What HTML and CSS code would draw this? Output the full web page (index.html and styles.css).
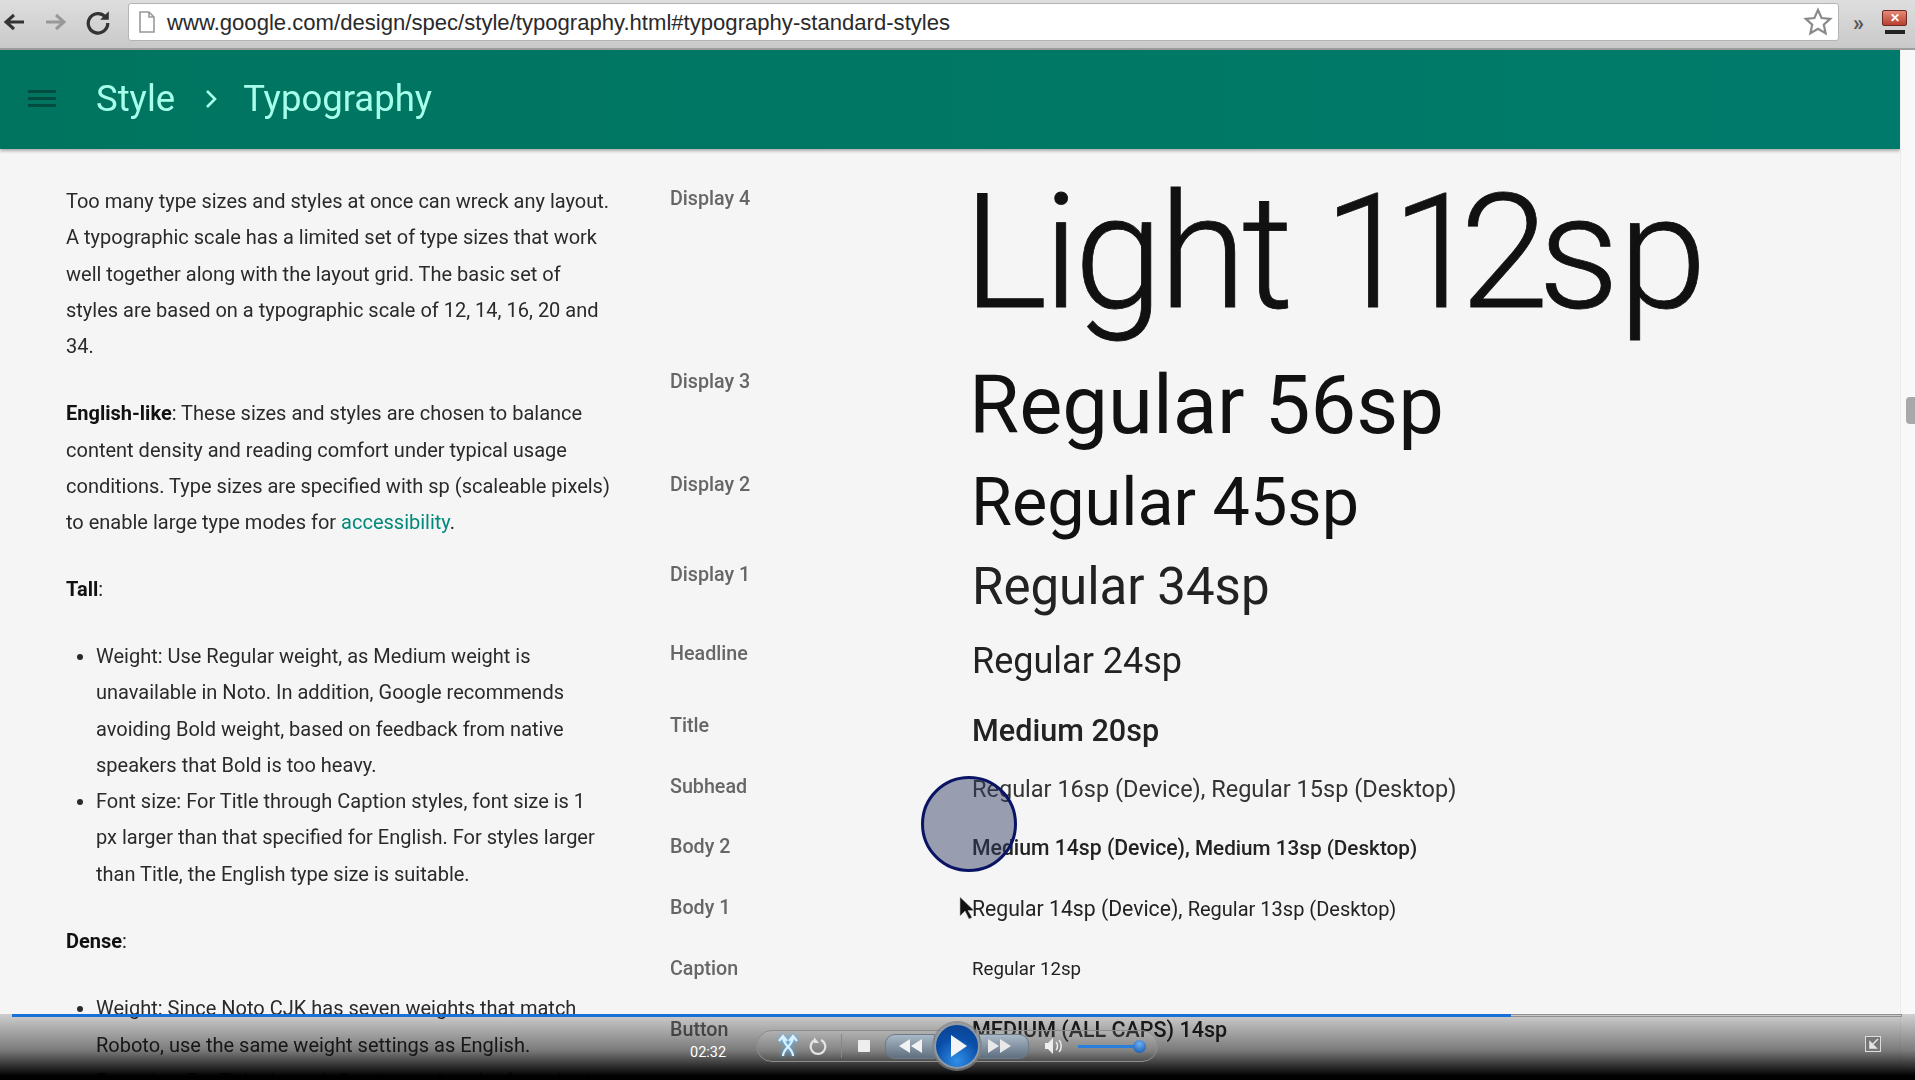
FILE: index.html
```html
<!DOCTYPE html>
<html>

<head>
    <title>Typography - Style</title>
    <link rel="stylesheet" href="styles.css">
</head>

<body>
    <div class="browser-bar">
        <svg class="nav-icon back" width="24" height="24" viewBox="0 0 24 24"><path d="M22 12H6M12 5l-8 7 8 7" fill="none" stroke="#333" stroke-width="3"/></svg>
        <svg class="nav-icon forward" width="24" height="24" viewBox="0 0 24 24"><path d="M2 12h16M12 5l8 7-8 7" fill="none" stroke="#999" stroke-width="3"/></svg>
        <svg class="nav-icon reload" width="26" height="26" viewBox="0 0 24 24"><path d="M19 7.5A9 9 0 1 0 21 13" fill="none" stroke="#333" stroke-width="3"/><path d="M22 2v8h-8z" fill="#333"/></svg>
        <div class="url-box">
            <svg width="18" height="24" viewBox="0 0 18 24"><path d="M2 2h9l5 5v15H2zM11 2v5h5" fill="#fff" stroke="#999" stroke-width="1.6"/></svg>
            <span class="url-text">www.google.com/design/spec/style/typography.html#typography-standard-styles</span>
            <svg class="star" width="30" height="30" viewBox="0 0 30 30"><path d="M15 3l3.6 8 8.6.9-6.4 5.8 1.8 8.5-7.6-4.4-7.6 4.4 1.8-8.5-6.4-5.8 8.6-.9z" fill="#fff" stroke="#8a8a8a" stroke-width="2.2"/></svg>
        </div>
        <span class="more">»</span>
        <div class="window-btns">
            <div class="close-btn">✕</div>
            <div class="wrench"></div>
        </div>
    </div>

    <div class="page">
        <div class="content">
            <div class="app-header">
                <div class="menu-icon"><span></span><span></span><span></span></div>
                <span class="crumb">Style</span>
                <svg class="crumb-arrow" width="14" height="24" viewBox="0 0 14 24"><path d="M3 4l8 8-8 8" fill="none" stroke="#a7ffeb" stroke-width="2.6"/></svg>
                <span class="crumb">Typography</span>
            </div>

            <div class="main">
                <div class="text-col">
                    <p>Too many type sizes and styles at once can wreck any layout. A typographic scale has a limited set of type sizes that work well together along with the layout grid. The basic set of styles are based on a typographic scale of 12, 14, 16, 20 and 34.</p>
                    <p class="tight"><b>English-like</b>: These sizes and styles are chosen to balance content density and reading comfort under typical usage conditions. Type sizes are specified with sp (scaleable pixels) to enable large type modes for <a href="#">accessibility</a>.</p>
                    <p><b>Tall</b>:</p>
                    <ul>
                        <li>Weight: Use Regular weight, as Medium weight is unavailable in Noto. In addition, Google recommends avoiding Bold weight, based on feedback from native speakers that Bold is too heavy.</li>
                        <li>Font size: For Title through Caption styles, font size is 1 px larger than that specified for English. For styles larger than Title, the English type size is suitable.</li>
                    </ul>
                    <p><b>Dense</b>:</p>
                    <ul>
                        <li>Weight: Since Noto CJK has seven weights that match Roboto, use the same weight settings as English.</li>
                        <li>Font size: For Title through Caption styles, the font size is</li>
                    </ul>
                </div>

                <div class="spec-col">
                    <div class="spec-row h-d4"><span class="spec-label">Display 4</span><span class="sample s-d4">Light <span class="d4-num">112</span><span class="d4-unit">sp</span></span></div>
                    <div class="spec-row h-d3"><span class="spec-label">Display 3</span><span class="sample s-d3">Regular 56sp</span></div>
                    <div class="spec-row h-d2"><span class="spec-label">Display 2</span><span class="sample s-d2">Regular 45sp</span></div>
                    <div class="spec-row h-d1"><span class="spec-label">Display 1</span><span class="sample s-d1">Regular 34sp</span></div>
                    <div class="spec-row h-head"><span class="spec-label">Headline</span><span class="sample s-head">Regular 24sp</span></div>
                    <div class="spec-row h-title"><span class="spec-label">Title</span><span class="sample s-title">Medium 20sp</span></div>
                    <div class="spec-row h-sub"><span class="spec-label">Subhead</span><span class="sample s-sub">Regular 16sp (Device), Regular 15sp (Desktop)</span></div>
                    <div class="spec-row h-body"><span class="spec-label">Body 2</span><span class="sample s-body2">Medium 14sp (Device), <span class="small-m">Medium 13sp (Desktop)</span></span></div>
                    <div class="spec-row h-body"><span class="spec-label">Body 1</span><span class="sample s-body1">Regular 14sp (Device), <span class="small-r">Regular 13sp (Desktop)</span></span></div>
                    <div class="spec-row h-body"><span class="spec-label">Caption</span><span class="sample s-cap">Regular 12sp</span></div>
                    <div class="spec-row h-body"><span class="spec-label">Button</span><span class="sample s-btn">MEDIUM (ALL CAPS) 14sp</span></div>
                </div>
            </div>
        </div>
        <div class="scroll-strip"><div class="scroll-thumb"></div></div>
    </div>

    <!-- click marker and cursor from the screen recording -->
    <div class="click-ring"></div>
    <svg class="cursor" width="16" height="24" viewBox="0 0 16 24"><path d="M1 1v19l5-5 4 8 3-1.500-4-7h6z" fill="#111" stroke="#bbb" stroke-width=".6"/></svg>

    <div class="player">
        <div class="progress"><div class="progress-done"></div></div>
        <span class="time">02:32</span>
        <div class="controls">
            <svg class="ctl-shuffle" width="24" height="24" viewBox="0 0 24 24"><path d="M7 22c0-8 10-10 10-19M17 22C17 14 7 12 7 3M3 7l4-5 4 5M13 7l4-5 4 5" fill="none" stroke="#d8f2ff" stroke-width="2.200"/></svg>
            <svg class="ctl-repeat" width="18" height="20" viewBox="0 0 18 20"><path d="M6 4a7.300 7.300 0 1 0 6 0" fill="none" stroke="#e4e4e4" stroke-width="2.200"/><path d="M5 1v6h5z" fill="#e4e4e4"/></svg>
            <div class="ctl-sep"></div>
            <div class="ctl-stop"></div>
            <div class="seek seek-back">
                <svg width="26" height="16" viewBox="0 0 26 16"><path d="M13 1v14L2 8zM25 1v14L14 8z" fill="#f2f2f2"/></svg>
            </div>
            <div class="play-btn">
                <svg width="18" height="24" viewBox="0 0 18 24"><path d="M1 1l16 11L1 23z" fill="#f4f4f4"/></svg>
            </div>
            <div class="seek seek-fwd">
                <svg width="26" height="16" viewBox="0 0 26 16"><path d="M1 1v14l11-7zM13 1v14l11-7z" fill="#e8e8e8"/></svg>
            </div>
            <svg class="ctl-volume" width="20" height="18" viewBox="0 0 20 18"><path d="M1 6h3l5-5v16l-5-5H1z" fill="#eee"/><path d="M12 5c2 2 2 6 0 8M15 3c3 3 3 9 0 12" fill="none" stroke="#eee" stroke-width="1.500"/></svg>
            <div class="volume-track"><div class="volume-knob"></div></div>
        </div>
        <svg class="restore" width="16" height="16" viewBox="0 0 16 16"><rect x=".5" y=".5" width="15" height="15" fill="#777" stroke="#ddd"/><path d="M13 3L7 9M5 6v6h6z" fill="#e6e6e6" stroke="#e6e6e6" stroke-width="1.500"/></svg>
    </div>
</body>

</html>
```

FILE: styles.css
```css
* {
    box-sizing: border-box;
}

html,
body {
    margin: 0;
    height: 1080px;
    overflow: hidden;
}

body {
    position: relative;
    display: flex;
    flex-direction: column;
    background-color: #f5f5f5;
    font-family: Roboto, "Liberation Sans", sans-serif;
    color: #222;
}

/* browser chrome */
.browser-bar {
    display: flex;
    align-items: center;
    flex-shrink: 0;
    height: 50px;
    padding: 0 6px 4px 2px;
    background: linear-gradient(#dedede, #c9c9c9);
    border-bottom: 2px solid #9d9d9d;
}

.nav-icon {
    flex-shrink: 0;
}

.forward {
    margin-left: 18px;
}

.reload {
    margin-left: 17px;
}

.url-box {
    display: flex;
    align-items: center;
    width: 1711px;
    height: 38px;
    margin-left: 17px;
    padding: 0 0 0 9px;
    background-color: #fff;
    border: 1px solid #b4b4b4;
    border-radius: 3px;
}

.url-text {
    flex: 1;
    margin: 2px 0 0 11px;
    font-family: "Liberation Sans", sans-serif;
    font-size: 22.100px;
    color: #2a2a2a;
    white-space: nowrap;
}

.star {
    margin-right: 5px;
}

.more {
    margin-left: 14px;
    font-size: 22px;
    font-weight: 700;
    color: #555;
}

.window-btns {
    display: flex;
    flex-direction: column;
    align-items: center;
    gap: 4px;
    margin-left: 18px;
}

.close-btn {
    width: 25px;
    height: 16px;
    background: linear-gradient(#e58a78, #b8402f);
    border: 1px solid #6d2b26;
    border-radius: 2px;
    color: #fff;
    font-size: 12px;
    font-weight: 700;
    line-height: 14px;
    text-align: center;
}

.wrench {
    width: 20px;
    height: 4px;
    background-color: #222;
}

/* page */
.page {
    display: flex;
    flex: 1;
    min-height: 0;
    filter: blur(.5px);
}

.content {
    flex: 1;
    min-width: 0;
}

.scroll-strip {
    width: 15px;
    padding: 347px 0 0 5px;
    background-color: #f8f8f8;
    border-left: 1px solid #ececec;
}

.scroll-thumb {
    width: 10px;
    height: 27px;
    background-color: #a8a8a8;
    border-radius: 4px 0 0 4px;
}

.app-header {
    display: flex;
    align-items: center;
    height: 99px;
    padding: 0 0 2px 28px;
    background: linear-gradient(90deg, #00745f, #007b6b);
    box-shadow: 0 2px 3px rgba(0, 0, 0, .3);
}

.menu-icon {
    display: flex;
    flex-direction: column;
    gap: 4px;
    width: 28px;
    margin-right: 40px;
}

.menu-icon span {
    height: 3px;
    background-color: #004d40;
}

.crumb {
    font-size: 36.500px;
    color: #a7ffeb;
}

.crumb-arrow {
    margin: 0 25px 0 29px;
}

.main {
    display: flex;
    padding-top: 34px;
}

.text-col {
    flex-shrink: 0;
    width: 670px;
    padding: 0 56px 0 66px;
    font-size: 20px;
    line-height: 36.300px;
    color: #2a2a2a;
}

.text-col p {
    margin: 0 0 31px;
}

.text-col p.tight {
    margin-bottom: 30px;
}

.text-col ul {
    margin: 0 0 31px;
    padding: 0 10px 0 30px;
}

.text-col a {
    color: #00897b;
    text-decoration: none;
}

.text-col b {
    font-weight: 700;
    color: #111;
}

.spec-col {
    flex: 1;
    padding-top: 4px;
}

.spec-row {
    display: flex;
    align-items: flex-start;
}

.h-d4 { height: 183px; }
.h-d3 { height: 103px; }
.h-d2 { height: 90px; }
.h-d1 { height: 79px; }
.h-head { height: 72px; }
.h-title { height: 61px; }
.h-sub { height: 60px; }
.h-body { height: 61px; }

.spec-label {
    flex-shrink: 0;
    width: 302px;
    font-size: 19.700px;
    font-weight: 500;
    line-height: 24px;
    color: #666;
}

.sample {
    white-space: nowrap;
    color: #222;
}

.s-d4 {
    margin: -4px 0 0 -9px;
    font-size: 160px;
    font-weight: 300;
    letter-spacing: -4.500px;
    line-height: 140px;
    color: #111;
    -webkit-text-stroke: .8px #111;
}

.d4-num {
    letter-spacing: -20.500px;
}

.d4-unit {
    margin-left: 10px;
    letter-spacing: -1px;
}

.s-d3 {
    margin: -5px 0 0 -3px;
    font-size: 81.400px;
    line-height: 80px;
    color: #111;
}

.s-d2 {
    margin: -6px 0 0 -1px;
    font-size: 66.500px;
    line-height: 70px;
    color: #111;
}

.s-d1 {
    margin-top: -4px;
    font-size: 51px;
    line-height: 56px;
}

.s-head {
    margin-top: -3px;
    font-size: 36px;
    line-height: 44px;
}

.s-title {
    margin-top: 1px;
    font-size: 30.600px;
    font-weight: 500;
    line-height: 32px;
}

.s-sub {
    font-size: 23.500px;
    line-height: 28px;
    color: #333;
}

.s-body2 {
    font-size: 21.200px;
    font-weight: 500;
    line-height: 26px;
}

.small-m {
    font-size: 20.700px;
}

.s-body1 {
    font-size: 21.200px;
    line-height: 26px;
}

.small-r {
    font-size: 20px;
}

.s-cap {
    font-size: 18.700px;
    line-height: 24px;
}

.s-btn {
    margin-top: -1px;
    font-size: 21.500px;
    font-weight: 500;
    line-height: 26px;
}

/* overlays from the recording */
.click-ring {
    position: absolute;
    left: 921px;
    top: 776px;
    width: 96px;
    height: 96px;
    background-color: rgba(50, 60, 100, .48);
    border: 3px solid #0a1464;
    border-radius: 50%;
}

.cursor {
    position: absolute;
    left: 959px;
    top: 896px;
}

/* video player bar */
.player {
    position: absolute;
    left: 0;
    right: 0;
    bottom: 0;
    display: flex;
    align-items: center;
    height: 66px;
    padding: 0 0 2px 690px;
    background: linear-gradient(rgba(0, 0, 0, .16), rgba(0, 0, 0, .5) 55%, #000 94%);
    color: #fff;
}

.progress {
    position: absolute;
    left: 12px;
    top: 0;
    width: 1890px;
    height: 3px;
    background-color: #c8c8c8;
    border: 1px solid #8f8f8f;
    border-left: 0;
}

.progress-done {
    width: 1499px;
    height: 3px;
    margin-top: -1px;
    background-color: #1a6fd8;
}

.time {
    width: 66px;
    margin-top: 12px;
    font-size: 14.500px;
}

.controls {
    display: flex;
    align-items: center;
    width: 402px;
    height: 32px;
    padding-left: 19px;
    border: 1px solid #8d8d8d;
    border-radius: 16px;
    background: linear-gradient(rgba(255, 255, 255, .12), rgba(255, 255, 255, .04));
}

.ctl-shuffle {
    filter: drop-shadow(0 0 2px #4db8ff);
}

.ctl-repeat {
    margin-left: 9px;
}

.ctl-sep {
    width: 1px;
    height: 24px;
    margin-left: 14px;
    background-color: #888;
}

.ctl-stop {
    width: 12px;
    height: 12px;
    margin-left: 16px;
    background-color: #eee;
    border-radius: 1px;
}

.seek {
    display: flex;
    align-items: center;
    justify-content: center;
    width: 50px;
    height: 25px;
    background: linear-gradient(#a9b9c7, #5f6f80);
    border: 1px solid #6c7b88;
}

.seek-back {
    margin-left: 15px;
    border-radius: 10px 0 0 10px;
}

.seek-fwd {
    width: 50px;
    padding-right: 8px;
    border-radius: 0 10px 10px 0;
}

.play-btn {
    z-index: 1;
    display: flex;
    align-items: center;
    justify-content: center;
    flex-shrink: 0;
    width: 46px;
    height: 46px;
    margin: 0 -1px;
    padding-left: 4px;
    border: 2px solid #8f9aa6;
    border-radius: 50%;
    background: radial-gradient(circle at 50% 85%, #2f8fe8, #0b4ea8 55%, #0a3f8e);
    box-shadow: 0 0 0 2px rgba(130, 130, 130, .7);
}

.ctl-volume {
    margin-left: 15px;
}

.volume-track {
    position: relative;
    width: 68px;
    height: 3px;
    margin-left: 14px;
    background-color: #2a7fdc;
}

.volume-knob {
    position: absolute;
    right: 0;
    top: -5px;
    width: 13px;
    height: 13px;
    background: radial-gradient(circle at 50% 30%, #6fb0f0, #0b4ea8);
    border-radius: 50%;
}

.restore {
    position: absolute;
    left: 1865px;
    top: 22px;
}
```
